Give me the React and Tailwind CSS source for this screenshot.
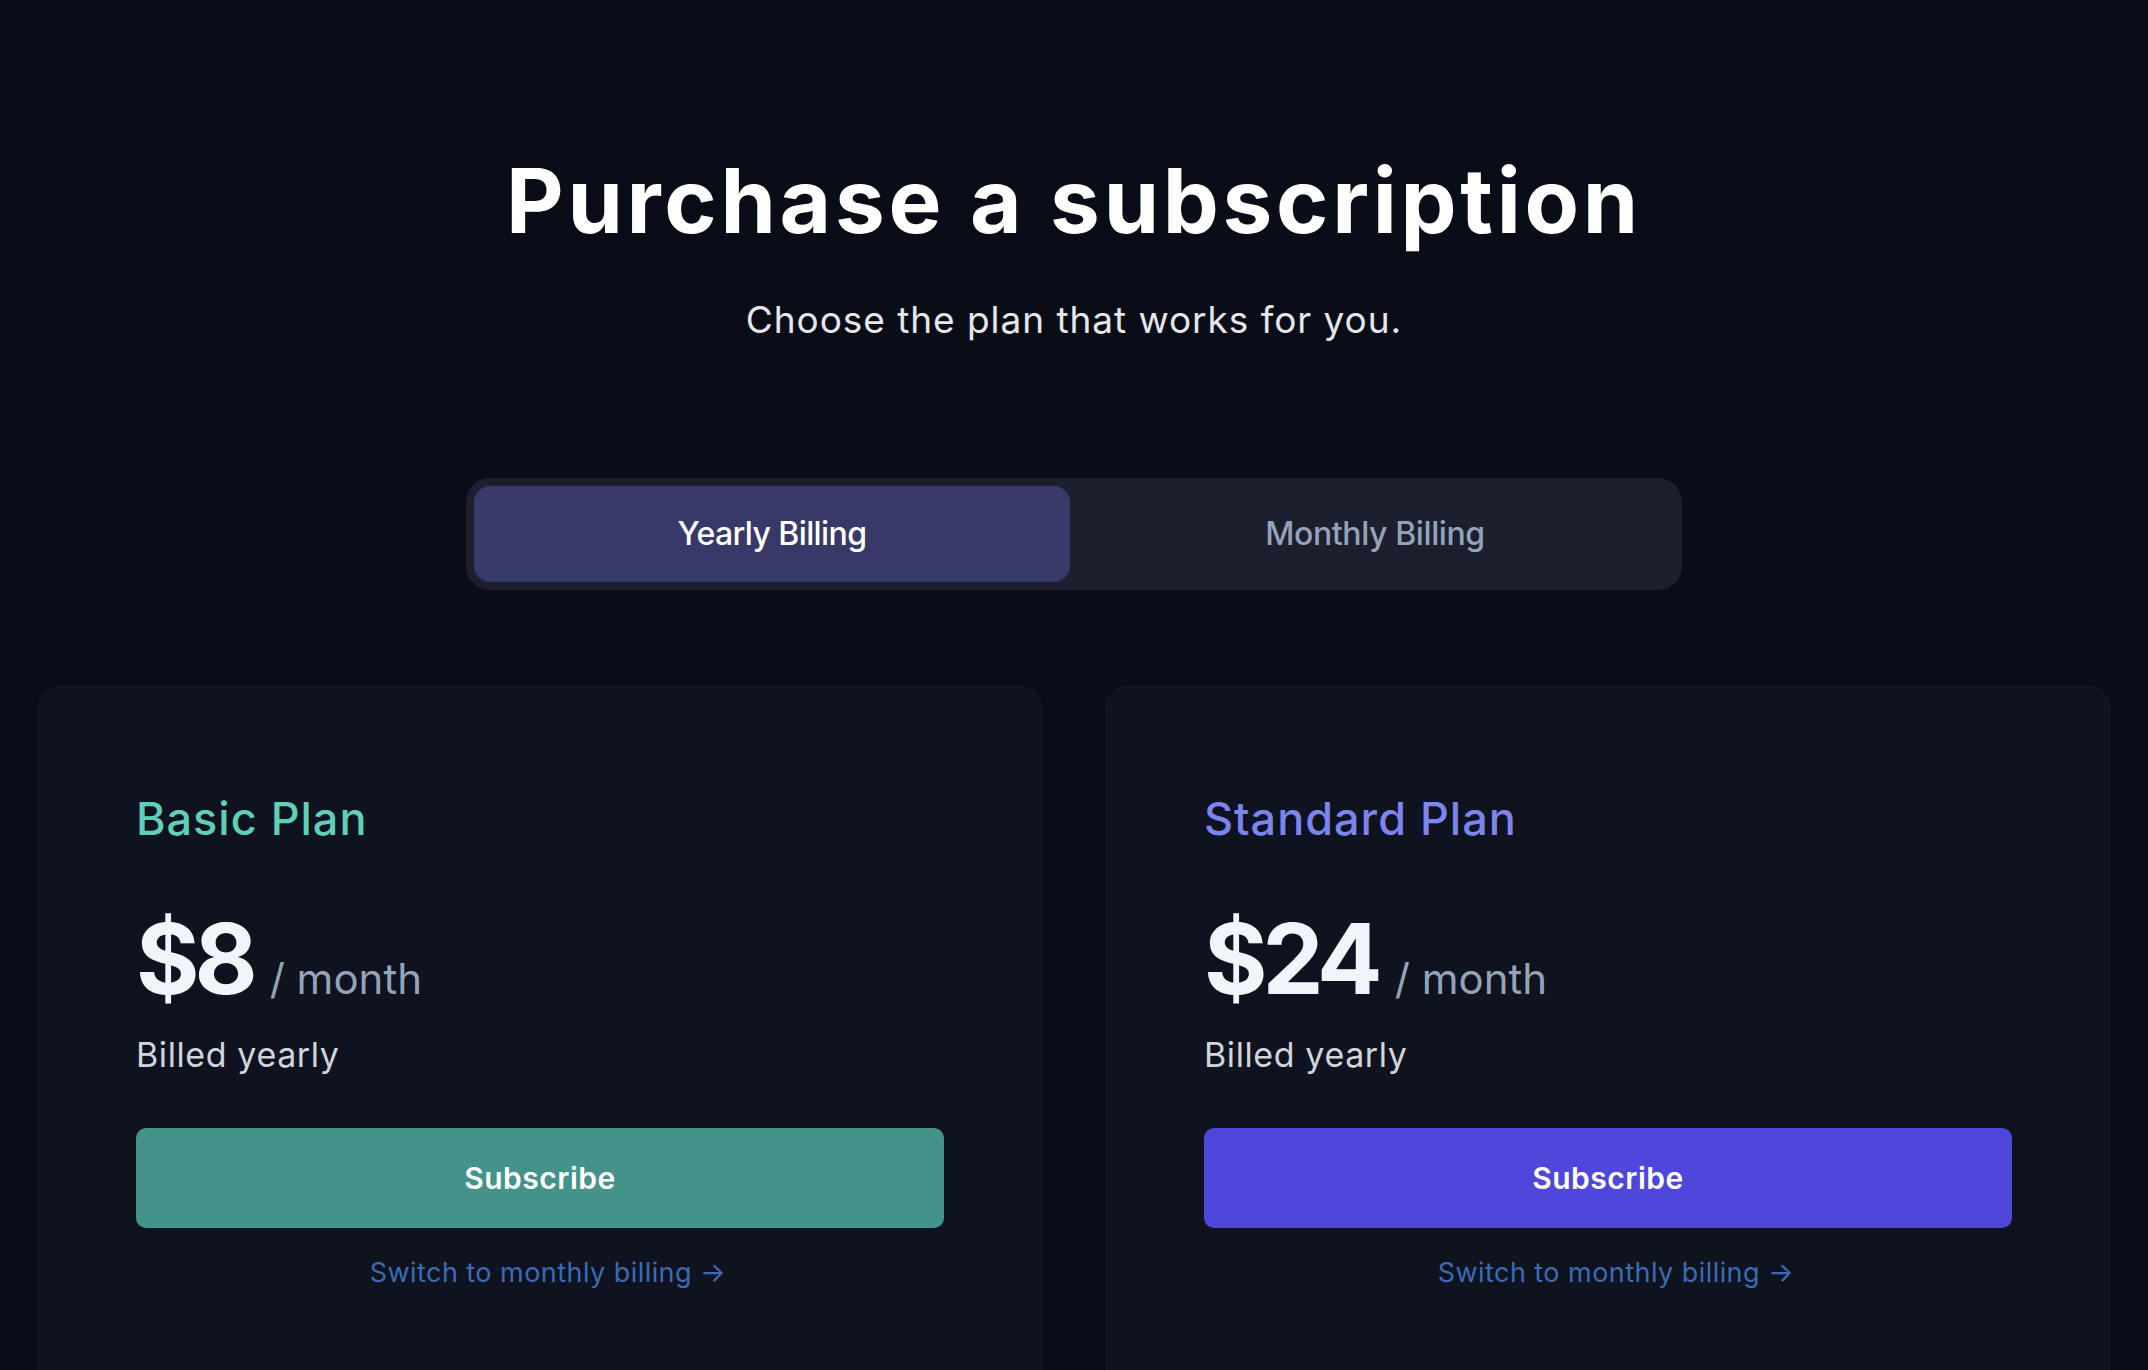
import React from "react";

function PlanCard({ name, nameColor, price, btnColor }) {
  return (
    <div className="rounded-[22px] border border-[#181c2a] bg-[#0f121f] px-[97px] pt-[105px] pb-[140px]">
      <h2 className={`text-[45px] leading-[54px] font-medium tracking-[1px] ${nameColor}`}>{name}</h2>
      <div className="mt-[64px] flex items-baseline">
        <span className="text-[97px] leading-none font-bold text-[#f1f5f9] tracking-[-5px]">{price}</span>
        <span className="ml-[17px] text-[42px] leading-none text-[#94a3b8]">/ month</span>
      </div>
      <p className="mt-[23px] text-[34px] leading-[49.5px] tracking-[0.6px] text-[#d1d5db]">Billed yearly</p>
      <button className={`mt-[49px] flex h-[100px] w-full items-center justify-center rounded-[10px] text-[30px] font-semibold tracking-[0.5px] text-white ${btnColor}`}>
        Subscribe
      </button>
      <div className="mt-[25px] flex justify-center pl-[16px]">
        <a className="text-[27px] leading-[40.5px] tracking-[0.45px] text-[#3d6bb3]">Switch to monthly billing →</a>
      </div>
    </div>
  );
}

export default function App() {
  return (
    <div
      className="min-h-screen overflow-hidden bg-[#0a0d17]"
      style={{ fontFamily: "Inter, 'Noto Sans', sans-serif" }}
    >
      <div className="flex flex-col items-center pt-[156px]">
        <h1 className="text-[89px] leading-none font-bold text-white tracking-[3.7px]">
          Purchase a subscription
        </h1>
        <p className="mt-[47px] text-[37px] leading-[55.5px] tracking-[0.95px] text-[#e5e7eb]">
          Choose the plan that works for you.
        </p>
        <div className="mt-[130px] flex w-[1216px] rounded-[24px] bg-[#1c1f2d] p-[8px]">
          <button className="flex h-[96px] w-[596px] items-center justify-center rounded-[16px] bg-[#373a68] text-[32px] font-medium tracking-[-0.6px] text-white">
            Yearly Billing
          </button>
          <button className="flex h-[96px] flex-1 items-center justify-center rounded-[16px] pl-[6px] text-[32px] font-medium tracking-[-0.4px] text-[#94a3b8]">
            Monthly Billing
          </button>
        </div>
      </div>
      <div className="mt-[96px] grid grid-cols-2 gap-[64px] px-[38px]">
        <PlanCard name="Basic Plan" nameColor="text-[#5fd0b5]" price="$8" btnColor="bg-[#44938a]" />
        <PlanCard name="Standard Plan" nameColor="text-[#7c84ee]" price="$24" btnColor="bg-[#4f46dc]" />
      </div>
    </div>
  );
}
